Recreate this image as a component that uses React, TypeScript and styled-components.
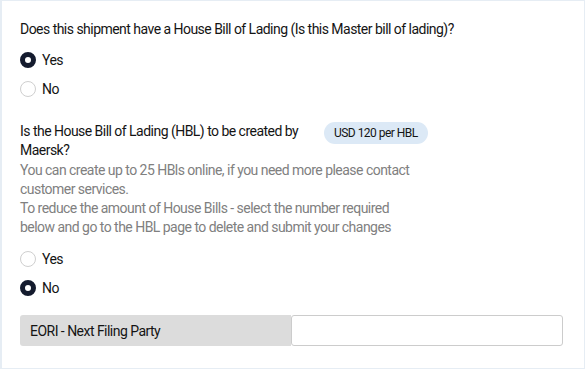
import React, { useState } from 'react';
import styled, { createGlobalStyle } from 'styled-components';

const Global = createGlobalStyle`
  html, body {
    margin: 0;
    padding: 0;
    background: #ffffff;
  }
  body {
    font-family: Roboto, "Noto Sans", sans-serif;
    letter-spacing: -0.53px;
    color: #141414;
  }
`;

const Card = styled.div`
  box-sizing: border-box;
  width: 585px;
  height: 369px;
  border: 1px solid #e6edf4;
  border-left-width: 2px;
  background: #fff;
  padding: 18px 21px 20px 18px;
  display: flex;
  flex-direction: column;

  > * {
    flex-shrink: 0;
  }
`;

const Question = styled.div`
  font-size: 14px;
  line-height: 20px;
  color: #141414;
`;

const RadioGroup = styled.div<{ $top: number }>`
  display: flex;
  flex-direction: column;
  gap: 9px;
  margin-top: ${(p) => p.$top}px;
`;

const RadioRow = styled.label`
  display: flex;
  align-items: center;
  gap: 6px;
  height: 20px;
  font-size: 14px;
  cursor: pointer;
`;

const Circle = styled.span<{ $checked: boolean }>`
  box-sizing: border-box;
  width: 16px;
  height: 16px;
  border-radius: 50%;
  background: #fff;
  border: ${(p) => (p.$checked ? '5px solid #141b2e' : '1px solid #cfcfcf')};
`;

const HeaderRow = styled.div`
  display: flex;
  align-items: flex-start;
  gap: 21px;
  margin-top: 23px;
`;

const QuestionWrap = styled(Question)`
  width: 283px;
  line-height: 19px;
`;

const Badge = styled.span`
  padding: 0 10px;
  height: 22px;
  line-height: 22px;
  border-radius: 11px;
  background: #dce9f6;
  font-size: 12px;
  color: #141414;
  white-space: nowrap;
`;

const Help = styled.div`
  width: 400px;
  margin-top: 1px;
  font-size: 14px;
  line-height: 19px;
  color: #808080;
`;

const Field = styled.div`
  display: flex;
  height: 31px;
  margin-top: 17px;
  width: 543px;
`;

const FieldLabel = styled.div`
  box-sizing: border-box;
  width: 271px;
  background: #dcdcdc;
  border-radius: 3px 0 0 3px;
  padding-left: 10px;
  display: flex;
  align-items: center;
  font-size: 14px;
`;

const Input = styled.input`
  box-sizing: border-box;
  flex: 1;
  border: 1px solid #cccccc;
  border-radius: 3px;
  font: inherit;
  font-size: 14px;
  padding: 0 10px;
  outline: none;
`;

function Radio({ label, checked, onClick }: { label: string; checked: boolean; onClick: () => void }) {
  return (
    <RadioRow onClick={onClick}>
      <Circle $checked={checked} />
      {label}
    </RadioRow>
  );
}

export default function App() {
  const [hasHbl, setHasHbl] = useState('yes');
  const [byMaersk, setByMaersk] = useState('no');

  return (
    <>
      <Global />
      <Card>
        <Question>Does this shipment have a House Bill of Lading (Is this Master bill of lading)?</Question>
        <RadioGroup $top={11}>
          <Radio label="Yes" checked={hasHbl === 'yes'} onClick={() => setHasHbl('yes')} />
          <Radio label="No" checked={hasHbl === 'no'} onClick={() => setHasHbl('no')} />
        </RadioGroup>

        <HeaderRow>
          <QuestionWrap>Is the House Bill of Lading (HBL) to be created by Maersk?</QuestionWrap>
          <Badge>USD 120 per HBL</Badge>
        </HeaderRow>
        <Help>
          You can create up to 25 HBls online, if you need more please contact customer services.
          <br />
          To reduce the amount of House Bills - select the number required below and go to the HBL page to delete and submit your changes
        </Help>
        <RadioGroup $top={12}>
          <Radio label="Yes" checked={byMaersk === 'yes'} onClick={() => setByMaersk('yes')} />
          <Radio label="No" checked={byMaersk === 'no'} onClick={() => setByMaersk('no')} />
        </RadioGroup>

        <Field>
          <FieldLabel>EORI - Next Filing Party</FieldLabel>
          <Input />
        </Field>
      </Card>
    </>
  );
}
